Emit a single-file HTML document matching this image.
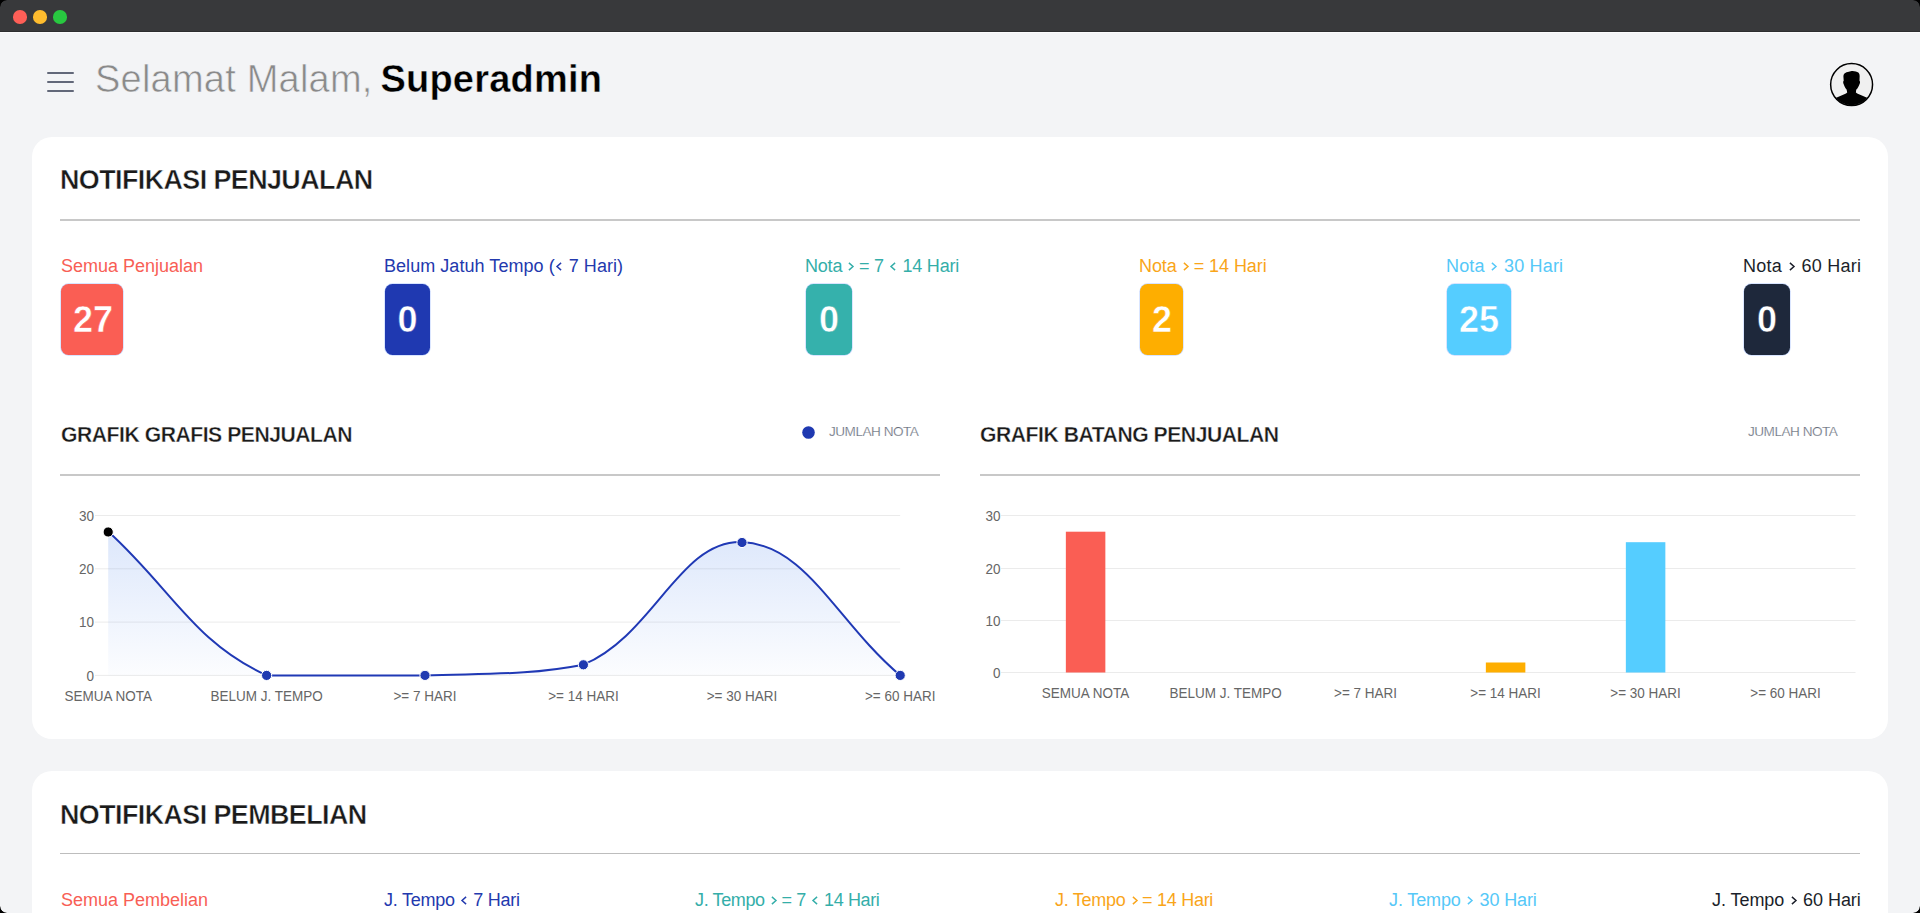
<!DOCTYPE html>
<html>
<head>
<meta charset="utf-8">
<style>
*{box-sizing:border-box;margin:0;padding:0}
html,body{width:1920px;height:913px;overflow:hidden;background:#000}
body{font-family:"Liberation Sans",sans-serif;position:relative}
.win{position:absolute;left:0;top:0;width:1920px;height:913px;border-radius:7px;overflow:hidden}
.content{position:absolute;left:0;top:32px;width:1920px;height:881px;background:#f3f4f6;border-radius:0 0 7px 7px}
.titlebar{position:absolute;left:0;top:0;width:1920px;height:32px;background:#38393b;border-bottom:1px solid #2c2d2f;border-radius:7px 7px 0 0}
.tl{position:absolute;top:10.2px;width:13.6px;height:13.6px;border-radius:50%}
.hl{position:absolute;top:32px;left:0;width:1920px;height:1px;background:#fbfbfc}
.abs{position:absolute;white-space:pre}
.hamb{position:absolute;left:47px;width:27px;height:2px;background:#626879;border-radius:1px}
.card{position:absolute;left:32px;width:1856px;background:#fff;border-radius:20px}
.h1{font-weight:700;font-size:28px;color:#1a1a1a;line-height:1;-webkit-text-stroke:0.45px #fff;letter-spacing:-0.6px;transform:scaleX(0.96);transform-origin:0 0}
.hr{position:absolute;height:2px;background:#c8c8c8}
.lbl{font-size:18px;line-height:1}
.badge{position:absolute;top:284px;height:71px;border-radius:7.5px;box-shadow:0 0 0 0.7px rgba(160,190,255,0.55);color:#fff;font-weight:700;font-size:36px;line-height:71px;text-align:center;padding:0 12px}
.h2{font-weight:700;font-size:22.5px;color:#1a1a1a;line-height:1;-webkit-text-stroke:0.35px #fff;letter-spacing:-0.5px;transform:scaleX(0.94);transform-origin:0 0}
.chv{display:inline-block;width:6px;height:9px;vertical-align:0.6px;margin:0 1.5px 0 1.5px;overflow:visible}
.eq{margin-left:3px}
.ax{font-size:13px;color:#666;line-height:1}
</style>
</head>
<body>
<div class="win">
  <div class="content"></div>
  <div class="titlebar">
    <div class="tl" style="left:13.1px;background:#fe5f57"></div>
    <div class="tl" style="left:33.1px;background:#febc2e"></div>
    <div class="tl" style="left:53.3px;background:#28c840"></div>
  </div>
  <div class="hl"></div>

  <!-- header -->
  <div class="hamb" style="top:72px"></div>
  <div class="hamb" style="top:81px"></div>
  <div class="hamb" style="top:90px"></div>
  <div class="abs" style="left:95px;top:57px;font-size:38px;line-height:44px;color:#8a8a8a;letter-spacing:0.22px"><span style="-webkit-text-stroke:0.6px #f3f4f6">Selamat Malam, </span><span style="color:#000;font-weight:700;margin-left:-3px;-webkit-text-stroke:0.4px #f3f4f6">Superadmin</span></div>

  <svg class="abs" style="left:1828px;top:61px" width="48" height="48" viewBox="0 0 48 48">
    <defs><clipPath id="cc"><circle cx="23.6" cy="23.55" r="20.6"/></clipPath></defs>
    <circle cx="23.6" cy="23.55" r="20.95" fill="#f0f0f0" stroke="#000" stroke-width="1.5"/>
    <g clip-path="url(#cc)" fill="#000">
      <path d="M16.2 12.8 C17.5 11.5 19.5 11 20.8 10.8 C22 10 23.5 9.9 24.5 9.9 C27 10 29 10.6 30.3 11.6 C31.5 12.5 31.8 14 31.6 16.8 L31.5 19.8 C32.2 20.3 32.2 22.3 31.5 23.3 C30.8 25.5 29.6 27.5 28.2 28.8 L27.9 31.6 L29.2 32.6 L38.5 36.4 L46 40 L46 50 L1 50 L1 40 L8.8 36.4 L18 32.6 L19.2 31.6 L18.6 28.6 C17.4 27.4 16.4 25.5 15.7 23.3 C15 22.3 15 20.3 15.7 19.8 L15.4 15.5 C15.4 14.5 15.6 13.5 16.2 12.8 Z"/>
    </g>
  </svg>

  <!-- card 1 -->
  <div class="card" style="top:137px;height:602px"></div>
  <div class="abs h1" style="left:60px;top:166px">NOTIFIKASI PENJUALAN</div>
  <div class="hr" style="left:60px;top:219px;width:1800px"></div>

  <div class="abs lbl" style="left:61px;top:257px;color:#f85e55">Semua Penjualan</div>
  <div class="abs lbl" style="left:384px;top:257px;color:#2339ae;letter-spacing:0.05px">Belum Jatuh Tempo (<svg class="chv" viewBox="0 0 6 9"><path d="M5.1 0.9 L1 4.5 L5.1 8.1" fill="none" stroke="currentColor" stroke-width="1.45"/></svg> 7 Hari)</div>
  <div class="abs lbl" style="left:805px;top:257px;color:#34aea9;letter-spacing:-0.21px">Nota <svg class="chv" viewBox="0 0 6 9"><path d="M0.9 0.9 L5 4.5 L0.9 8.1" fill="none" stroke="currentColor" stroke-width="1.45"/></svg><span class="eq">=</span> 7 <svg class="chv" viewBox="0 0 6 9"><path d="M5.1 0.9 L1 4.5 L5.1 8.1" fill="none" stroke="currentColor" stroke-width="1.45"/></svg> 14 Hari</div>
  <div class="abs lbl" style="left:1139px;top:257px;color:#f9a51a;letter-spacing:-0.07px">Nota <svg class="chv" viewBox="0 0 6 9"><path d="M0.9 0.9 L5 4.5 L0.9 8.1" fill="none" stroke="currentColor" stroke-width="1.45"/></svg><span class="eq">=</span> 14 Hari</div>
  <div class="abs lbl" style="left:1446px;top:257px;color:#55c8f8;letter-spacing:0.17px">Nota <svg class="chv" viewBox="0 0 6 9"><path d="M0.9 0.9 L5 4.5 L0.9 8.1" fill="none" stroke="currentColor" stroke-width="1.45"/></svg> 30 Hari</div>
  <div class="abs lbl" style="left:1743px;top:257px;color:#1b1f2a;letter-spacing:0.25px">Nota <svg class="chv" viewBox="0 0 6 9"><path d="M0.9 0.9 L5 4.5 L0.9 8.1" fill="none" stroke="currentColor" stroke-width="1.45"/></svg> 60 Hari</div>

  <div class="badge" style="left:61px;width:62px;background:#fa5e54;-webkit-text-stroke:0.5px #fa5e54">27</div>
  <div class="badge" style="left:385px;width:45px;background:#1f39b1;-webkit-text-stroke:0.5px #1f39b1">0</div>
  <div class="badge" style="left:806px;width:46px;background:#35b1ac;-webkit-text-stroke:0.5px #35b1ac">0</div>
  <div class="badge" style="left:1140px;width:43px;background:#feae00;-webkit-text-stroke:0.5px #feae00">2</div>
  <div class="badge" style="left:1447px;width:64px;background:#55cdff;-webkit-text-stroke:0.5px #55cdff">25</div>
  <div class="badge" style="left:1744px;width:46px;background:#1e283b;-webkit-text-stroke:0.5px #1e283b">0</div>

  <!-- chart headers -->
  <div class="abs h2" style="left:61px;top:424px">GRAFIK GRAFIS PENJUALAN</div>
  <div class="hr" style="left:60px;top:474px;width:880px"></div>
  <div class="abs h2" style="left:980px;top:424px">GRAFIK BATANG PENJUALAN</div>
  <div class="hr" style="left:980px;top:474px;width:880px"></div>

  <svg class="abs" style="left:802px;top:426px" width="13" height="13"><circle cx="6.5" cy="6.5" r="6.3" fill="#1f39b1"/></svg>
  <div class="abs" style="left:829px;top:425px;font-size:13.6px;line-height:14px;color:#666d7a;letter-spacing:-0.5px;-webkit-text-stroke:0.22px #fff">JUMLAH NOTA</div>
  <div class="abs" style="left:1748px;top:425px;font-size:13.6px;line-height:14px;color:#666d7a;letter-spacing:-0.5px;-webkit-text-stroke:0.22px #fff">JUMLAH NOTA</div>

  <!-- CHARTS -->
  <svg id="chartsvg" class="abs" style="left:0;top:0;overflow:visible" width="1920" height="913" viewBox="0 0 1920 913" font-family="Liberation Sans, sans-serif">
  <defs><linearGradient id="gf" x1="0" y1="515" x2="0" y2="675" gradientUnits="userSpaceOnUse"><stop offset="0" stop-color="#1e64e6" stop-opacity="0.17"/><stop offset="1" stop-color="#1e64e6" stop-opacity="0.015"/></linearGradient></defs>
  <line x1="95" y1="515.5" x2="900.2" y2="515.5" stroke="#ebebeb" stroke-width="1"/>
  <line x1="95" y1="568.8" x2="900.2" y2="568.8" stroke="#ebebeb" stroke-width="1"/>
  <line x1="95" y1="622.1" x2="900.2" y2="622.1" stroke="#ebebeb" stroke-width="1"/>
  <line x1="95" y1="675.4" x2="900.2" y2="675.4" stroke="#ebebeb" stroke-width="1"/>
  <text transform="translate(94 520.6) scale(1 1.1)" text-anchor="end" font-size="13.5" fill="#666">30</text>
  <text transform="translate(94 573.9) scale(1 1.1)" text-anchor="end" font-size="13.5" fill="#666">20</text>
  <text transform="translate(94 627.2) scale(1 1.1)" text-anchor="end" font-size="13.5" fill="#666">10</text>
  <text transform="translate(94 680.5) scale(1 1.1)" text-anchor="end" font-size="13.5" fill="#666">0</text>
  <path d="M108.2 531.5 C171.6 589.1 193.8 642.3 266.6 675.4 C320.5 675.4 361.7 675.4 425.0 675.4 C488.4 673.3 527.4 675.4 583.4 664.7 C654.1 635.0 679.5 540.1 741.8 542.1 C806.2 544.3 836.8 622.1 900.2 675.4 L900.2 675.4 L108.2 675.4 Z" fill="url(#gf)"/>
  <path d="M108.2 531.5 C171.6 589.1 193.8 642.3 266.6 675.4 C320.5 675.4 361.7 675.4 425.0 675.4 C488.4 673.3 527.4 675.4 583.4 664.7 C654.1 635.0 679.5 540.1 741.8 542.1 C806.2 544.3 836.8 622.1 900.2 675.4" fill="none" stroke="#2039b5" stroke-width="2"/>
  <circle cx="108.2" cy="532" r="5.1" fill="#000" stroke="#fff" stroke-width="1"/>
  <circle cx="266.6" cy="675.4" r="5.1" fill="#1f39b1" stroke="#fff" stroke-width="1"/>
  <circle cx="425" cy="675.4" r="5.1" fill="#1f39b1" stroke="#fff" stroke-width="1"/>
  <circle cx="583.4" cy="664.8" r="5.1" fill="#1f39b1" stroke="#fff" stroke-width="1"/>
  <circle cx="742" cy="542.5" r="5.1" fill="#1f39b1" stroke="#fff" stroke-width="1"/>
  <circle cx="900.2" cy="675.4" r="5.1" fill="#1f39b1" stroke="#fff" stroke-width="1"/>
  <text transform="translate(108.2 701) scale(1 1.1)" text-anchor="middle" font-size="13.5" fill="#666">SEMUA NOTA</text>
  <text transform="translate(266.6 701) scale(1 1.1)" text-anchor="middle" font-size="13.5" fill="#666">BELUM J. TEMPO</text>
  <text transform="translate(425 701) scale(1 1.1)" text-anchor="middle" font-size="13.5" fill="#666">&gt;= 7 HARI</text>
  <text transform="translate(583.4 701) scale(1 1.1)" text-anchor="middle" font-size="13.5" fill="#666">&gt;= 14 HARI</text>
  <text transform="translate(742 701) scale(1 1.1)" text-anchor="middle" font-size="13.5" fill="#666">&gt;= 30 HARI</text>
  <text transform="translate(900.2 701) scale(1 1.1)" text-anchor="middle" font-size="13.5" fill="#666">&gt;= 60 HARI</text>
  <line x1="1001" y1="515.5" x2="1855.5" y2="515.5" stroke="#ebebeb" stroke-width="1"/>
  <line x1="1001" y1="568.5" x2="1855.5" y2="568.5" stroke="#ebebeb" stroke-width="1"/>
  <line x1="1001" y1="620.5" x2="1855.5" y2="620.5" stroke="#ebebeb" stroke-width="1"/>
  <line x1="1001" y1="672.5" x2="1855.5" y2="672.5" stroke="#ebebeb" stroke-width="1"/>
  <text transform="translate(1000.5 520.6) scale(1 1.1)" text-anchor="end" font-size="13.5" fill="#666">30</text>
  <text transform="translate(1000.5 573.6) scale(1 1.1)" text-anchor="end" font-size="13.5" fill="#666">20</text>
  <text transform="translate(1000.5 625.6) scale(1 1.1)" text-anchor="end" font-size="13.5" fill="#666">10</text>
  <text transform="translate(1000.5 677.6) scale(1 1.1)" text-anchor="end" font-size="13.5" fill="#666">0</text>
  <rect x="1065.85" y="531.7" width="39.5" height="140.8" fill="#fa5e54"/>
  <rect x="1485.85" y="662.5" width="39.5" height="10.0" fill="#feae00"/>
  <rect x="1625.85" y="542.2" width="39.5" height="130.3" fill="#55cdff"/>
  <text transform="translate(1085.6 698) scale(1 1.1)" text-anchor="middle" font-size="13.5" fill="#666">SEMUA NOTA</text>
  <text transform="translate(1225.6 698) scale(1 1.1)" text-anchor="middle" font-size="13.5" fill="#666">BELUM J. TEMPO</text>
  <text transform="translate(1365.6 698) scale(1 1.1)" text-anchor="middle" font-size="13.5" fill="#666">&gt;= 7 HARI</text>
  <text transform="translate(1505.6 698) scale(1 1.1)" text-anchor="middle" font-size="13.5" fill="#666">&gt;= 14 HARI</text>
  <text transform="translate(1645.6 698) scale(1 1.1)" text-anchor="middle" font-size="13.5" fill="#666">&gt;= 30 HARI</text>
  <text transform="translate(1785.6 698) scale(1 1.1)" text-anchor="middle" font-size="13.5" fill="#666">&gt;= 60 HARI</text>
  </svg>

  <!-- card 2 -->
  <div class="card" style="top:771px;height:200px"></div>
  <div class="abs h1" style="left:60px;top:801px">NOTIFIKASI PEMBELIAN</div>
  <div class="hr" style="left:60px;top:853px;width:1800px;height:1px;background:#bdbdbd"></div>
  <div class="abs lbl" style="left:61px;top:891px;color:#f85e55">Semua Pembelian</div>
  <div class="abs lbl" style="left:384px;top:891px;color:#2339ae;letter-spacing:-0.25px">J. Tempo <svg class="chv" viewBox="0 0 6 9"><path d="M5.1 0.9 L1 4.5 L5.1 8.1" fill="none" stroke="currentColor" stroke-width="1.45"/></svg> 7 Hari</div>
  <div class="abs lbl" style="left:695px;top:891px;color:#34aea9;letter-spacing:-0.37px">J. Tempo <svg class="chv" viewBox="0 0 6 9"><path d="M0.9 0.9 L5 4.5 L0.9 8.1" fill="none" stroke="currentColor" stroke-width="1.45"/></svg><span class="eq">=</span> 7 <svg class="chv" viewBox="0 0 6 9"><path d="M5.1 0.9 L1 4.5 L5.1 8.1" fill="none" stroke="currentColor" stroke-width="1.45"/></svg> 14 Hari</div>
  <div class="abs lbl" style="left:1055px;top:891px;color:#f9a51a;letter-spacing:-0.29px">J. Tempo <svg class="chv" viewBox="0 0 6 9"><path d="M0.9 0.9 L5 4.5 L0.9 8.1" fill="none" stroke="currentColor" stroke-width="1.45"/></svg><span class="eq">=</span> 14 Hari</div>
  <div class="abs lbl" style="left:1389px;top:891px;color:#55c8f8;letter-spacing:-0.12px">J. Tempo <svg class="chv" viewBox="0 0 6 9"><path d="M0.9 0.9 L5 4.5 L0.9 8.1" fill="none" stroke="currentColor" stroke-width="1.45"/></svg> 30 Hari</div>
  <div class="abs lbl" style="left:1712px;top:891px;color:#1b1f2a;letter-spacing:-0.06px">J. Tempo <svg class="chv" viewBox="0 0 6 9"><path d="M0.9 0.9 L5 4.5 L0.9 8.1" fill="none" stroke="currentColor" stroke-width="1.45"/></svg> 60 Hari</div>
</div>
</body>
</html>
